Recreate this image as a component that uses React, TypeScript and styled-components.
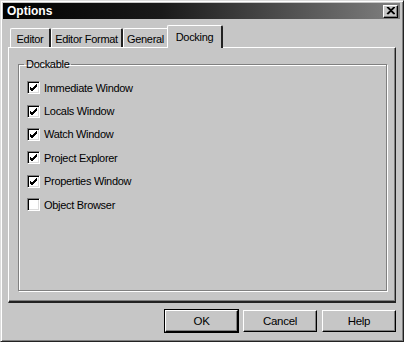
import React from 'react';
import styled, { createGlobalStyle } from 'styled-components';

const GlobalStyle = createGlobalStyle`
  html, body {
    margin: 0;
    padding: 0;
    background: #c6c6c6;
  }
  body {
    font-family: "Liberation Sans", Arial, sans-serif;
    font-size: 11px;
    letter-spacing: -0.3px;
    color: #000;
  }
`;

const Window = styled.div`
  box-sizing: border-box;
  width: 404px;
  height: 342px;
  background: #c6c6c6;
  border-top: 1px solid #dcdcdc;
  border-left: 1px solid #dcdcdc;
  border-right: 1px solid #222;
  border-bottom: 1px solid #222;
  box-shadow: inset 1px 1px 0 #fff, inset -1px -1px 0 #808080;
  padding: 2px 3px 3px 2px;
  display: flex;
  flex-direction: column;
`;

const TitleBar = styled.div`
  height: 16px;
  display: flex;
  align-items: center;
  justify-content: space-between;
  background: linear-gradient(to right, #000 0%, #1a1a1a 40%, #808080 100%);
  padding: 0 2px 0 4px;
`;

const Title = styled.span`
  color: #fff;
  font-weight: bold;
  font-size: 12px;
  letter-spacing: 0;
`;

const CloseButton = styled.div`
  box-sizing: border-box;
  width: 15px;
  height: 13px;
  background: #c6c6c6;
  border-top: 1px solid #fff;
  border-left: 1px solid #fff;
  border-right: 1px solid #000;
  border-bottom: 1px solid #000;
  box-shadow: inset -1px -1px 0 #808080;
  display: flex;
  align-items: center;
  justify-content: center;
`;

const Body = styled.div`
  flex: 1;
  display: flex;
  flex-direction: column;
  padding: 6px 4px 6px 5px;
`;

const TabRow = styled.div`
  display: flex;
  align-items: flex-end;
  height: 22px;
  padding-left: 2px;
  position: relative;
  z-index: 1;
`;

const Tab = styled.div<{ $active?: boolean; $width: number }>`
  box-sizing: border-box;
  width: ${p => p.$width}px;
  height: ${p => (p.$active ? 23 : 19)}px;
  margin-bottom: ${p => (p.$active ? -1 : 0)}px;
  margin-left: ${p => (p.$active ? -2 : 0)}px;
  margin-right: ${p => (p.$active ? -2 : 0)}px;
  background: #c6c6c6;
  border-top: 1px solid #fff;
  border-left: 1px solid #fff;
  border-right: 2px solid #222;
  border-radius: 2px 2px 0 0;
  display: flex;
  align-items: center;
  justify-content: center;
  padding-top: ${p => (p.$active ? 0 : 2)}px;
  white-space: nowrap;
  font-size: 11px;
`;

const Panel = styled.div`
  box-sizing: border-box;
  flex: 1;
  border-top: 1px solid #fff;
  border-left: 1px solid #fff;
  border-right: 1px solid #222;
  border-bottom: 2px solid #222;
  box-shadow: inset -1px -1px 0 #808080;
  padding: 10px 8px 10px 9px;
  display: flex;
`;

const GroupBox = styled.fieldset`
  box-sizing: border-box;
  flex: 1;
  margin: 0;
  border: 1px solid #808080;
  box-shadow: 1px 1px 0 #fff, inset 1px 1px 0 #fff;
  padding: 6px 0 0 8px;
  display: flex;
  flex-direction: column;
`;

const Legend = styled.legend`
  padding: 0 2px;
  margin-left: -3px;
  font-size: 11px;
`;

const Item = styled.label`
  display: flex;
  align-items: center;
  height: 23.4px;
  gap: 4px;
  font-size: 11px;
`;

const Box = styled.span`
  box-sizing: border-box;
  width: 13px;
  height: 13px;
  background: #fff;
  border-top: 1px solid #808080;
  border-left: 1px solid #808080;
  border-right: 1px solid #fff;
  border-bottom: 1px solid #fff;
  box-shadow: inset 1px 1px 0 #000, inset -1px -1px 0 #dcdcdc;
  display: flex;
  align-items: center;
  justify-content: center;
`;

const ButtonRow = styled.div`
  display: flex;
  justify-content: flex-end;
  gap: 5px;
  padding-top: 7px;
`;

const Button = styled.button<{ $default?: boolean }>`
  box-sizing: border-box;
  width: ${p => (p.$default ? 73 : 74)}px;
  height: 22px;
  background: #c6c6c6;
  font-family: "Liberation Sans", Arial, sans-serif;
  font-size: 11.5px;
  letter-spacing: -0.3px;
  color: #000;
  padding: 0;
  border-top: 1px solid #fff;
  border-left: 1px solid #fff;
  border-right: 1px solid #000;
  border-bottom: 1px solid #000;
  box-shadow: inset -1px -1px 0 #808080;
  outline: ${p => (p.$default ? '1px solid #000' : 'none')};
  outline-offset: 0;
`;

const Check = () => (
  <svg width="9" height="9" viewBox="0 0 9 9">
    <path d="M1 4 L3 6 L8 1 M1 5 L3 7 L8 2 M1 6 L3 8 L8 3" stroke="#000" strokeWidth="1" fill="none" />
  </svg>
);

const items = [
  { label: 'Immediate Window', checked: true },
  { label: 'Locals Window', checked: true },
  { label: 'Watch Window', checked: true },
  { label: 'Project Explorer', checked: true },
  { label: 'Properties Window', checked: true },
  { label: 'Object Browser', checked: false },
];

const tabs = [
  { label: 'Editor', width: 41 },
  { label: 'Editor Format', width: 72 },
  { label: 'General', width: 46 },
  { label: 'Docking', width: 56, active: true },
];

export default function App() {
  return (
    <>
      <GlobalStyle />
      <Window>
        <TitleBar>
          <Title>Options</Title>
          <CloseButton>
            <svg width="9" height="8" viewBox="0 0 9 8">
              <path d="M1 0 L8 7 M2 0 L9 7 M8 0 L1 7 M9 0 L2 7" stroke="#000" strokeWidth="1.2" />
            </svg>
          </CloseButton>
        </TitleBar>
        <Body>
          <TabRow>
            {tabs.map(t => (
              <Tab key={t.label} $active={t.active} $width={t.width}>
                {t.label}
              </Tab>
            ))}
          </TabRow>
          <Panel>
            <GroupBox>
              <Legend>Dockable</Legend>
              {items.map(it => (
                <Item key={it.label}>
                  <Box>{it.checked && <Check />}</Box>
                  {it.label}
                </Item>
              ))}
            </GroupBox>
          </Panel>
          <ButtonRow>
            <Button $default>OK</Button>
            <Button>Cancel</Button>
            <Button>Help</Button>
          </ButtonRow>
        </Body>
      </Window>
    </>
  );
}
